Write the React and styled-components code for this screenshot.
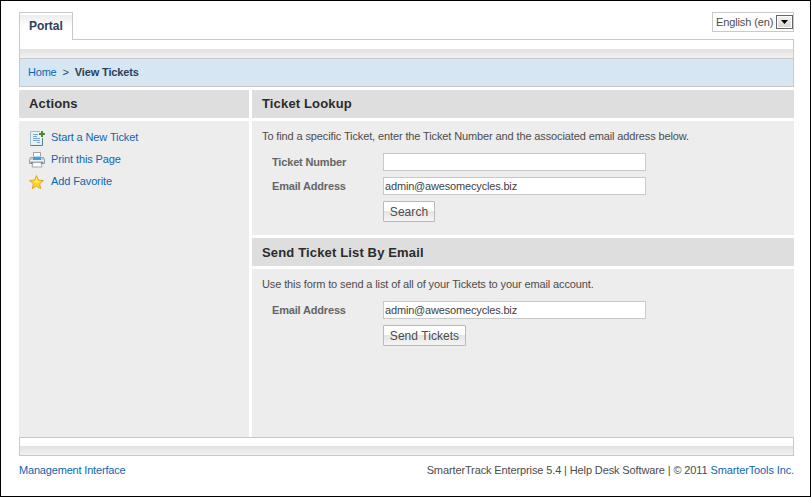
import React from "react";
import styled, { createGlobalStyle } from "styled-components";

const GlobalStyle = createGlobalStyle`
  *, *::before, *::after { box-sizing: border-box; }
  body { margin: 0; background: #fff; }
`;

const Page = styled.div`
  display: flex;
  flex-direction: column;
  width: 811px;
  height: 497px;
  padding: 11px 16px 0 18px;
  border: 1px solid #000;
  background: #fff;
  color: #4c4c4c;
  font: 11px/14px "Liberation Sans", Arial, sans-serif;
  letter-spacing: -0.12px;
  white-space: nowrap;
`;

const Link = styled.a`
  color: #0e66b0;
  text-decoration: none;
  letter-spacing: ${(p) => (p.$ls === undefined ? "inherit" : `${p.$ls}px`)};
`;

const TopBar = styled.header`
  display: flex;
  justify-content: space-between;
  align-items: flex-start;
  height: 27px;
`;

const Tab = styled.div`
  position: relative;
  z-index: 1;
  width: 54px;
  height: 28px;
  padding: 6px 0 0 9px;
  border: 1px solid #c9c9c9;
  border-bottom: 0;
  background: linear-gradient(#fff 0 2px, #ececec 2px, #fff 14px);
  color: #2c4058;
  font-size: 12px;
  font-weight: bold;
  line-height: 15px;
  letter-spacing: -0.05px;
`;

const Language = styled.div`
  display: flex;
  justify-content: space-between;
  width: 82px;
  height: 20px;
  padding: 2px 0 0 3px;
  border: 1px solid #c9c9c9;
  line-height: 15px;
`;

const Arrow = styled.span`
  display: flex;
  align-items: center;
  justify-content: center;
  width: 17px;
  height: 14px;
  border: 1px solid #666;
  background: linear-gradient(#f4f4f4, #d4d4d4);
  box-shadow: inset 0 0 0 1px #fff;
`;

const Strip = styled.div`
  flex: none;
  height: ${(p) => p.$height}px;
  border: 1px solid #c9c9c9;
  background: linear-gradient(#fff 0 ${(p) => p.$split}px, #e2e2e2 ${(p) => p.$split}px, #f2f2f2);
`;

const Crumbs = styled.nav`
  display: flex;
  gap: 6px;
  height: 28px;
  padding: 6px 8px 0;
  border: 1px solid #c9c9c9;
  border-top: 0;
  background: #d7e6f3;
  color: #2c4058;
  b { letter-spacing: -0.15px; }
`;

const Columns = styled.main`
  display: grid;
  grid-template-columns: 230px 542px;
  gap: 3px;
  height: 347px;
  margin-top: 3px;
`;

const Column = styled.section`
  display: flex;
  flex-direction: column;
  gap: 3px;
`;

const Heading = styled.h2`
  height: 28px;
  margin: 0;
  padding: ${(p) => p.$top || 6}px 10px 0;
  background: #dedede;
  color: #2b2b2b;
  font-size: 13px;
  line-height: 16px;
  letter-spacing: 0.15px;
`;

const Body = styled.div`
  flex: ${(p) => (p.$height ? `0 0 ${p.$height}px` : "1")};
  padding: ${(p) => (p.$height ? 8 : 9)}px 10px 0;
  background: #ededed;
`;

const Action = styled.div`
  display: flex;
  align-items: flex-start;
  height: 22px;
  svg { margin-right: 6px; }
`;

const Intro = styled.p`
  margin: 0 0 10px;
`;

const Field = styled.label`
  display: flex;
  height: 24px;
  padding-left: 10px;
  color: #666;
  font-weight: bold;
  line-height: 18px;
`;

const FieldName = styled.span`
  width: 111px;
  letter-spacing: -0.17px;
`;

const Input = styled.input`
  width: 263px;
  height: 18px;
  padding: 0 1px;
  border: 1px solid #c9c9c9;
  border-radius: 0;
  background: #fff;
  color: #3f3f3f;
  font: 11px "Liberation Sans", Arial, sans-serif;
  letter-spacing: -0.17px;
  outline: none;
`;

const Button = styled.button`
  display: block;
  width: ${(p) => p.$width}px;
  height: 21px;
  margin-left: 121px;
  padding: 0;
  border: 1px solid #b9b9b9;
  border-radius: 1px;
  background: linear-gradient(#fff 0 9px, #e4e4e4 9px, #f5f5f5);
  color: #4c4c4c;
  font: 12px/18px "Liberation Sans", Arial, sans-serif;
  letter-spacing: 0.05px;
`;

const Footer = styled.footer`
  display: flex;
  justify-content: space-between;
  padding-top: 7px;
`;

const NewTicketIcon = () => (
  <svg width="16" height="16" viewBox="0 0 16 16">
    <path d="M1.5 1.5h12v14h-12z" fill="#e4f0f7" stroke="#9fbccd" />
    <path d="M4 4.5h5M4 6.5h4M4 8.5h7M4 10.5h7M8 12.5h3" stroke="#7aa9cb" />
    <path d="M13.5 8v7.5h-12" fill="none" stroke="#5b7c91" />
    <path d="M11 0h4v3h1v4h-1v1h-4V7H9V3h2z" fill="#e8f3e8" />
    <path d="M13 1v6M10 4h6" stroke="#4a8538" strokeWidth="2" />
  </svg>
);

const PrinterIcon = () => (
  <svg width="16" height="16" viewBox="0 0 16 16">
    <path d="M4.5.5h7v6h-7z" fill="#fff" stroke="#9aa1a8" />
    <path d="M1.5 5.5h13l1 2v4h-15v-4z" fill="#cdd0d4" stroke="#9a9fa5" />
    <path d="M4 4h8v4H4z" fill="#4a9bd0" />
    <path d="M4 4h8v1H4z" fill="#a9d6f2" />
    <path d="M1 8.5h14" stroke="#eef0f2" />
    <path d="M2 10h12v2H2z" fill="#7a7f85" />
    <path d="M4 10.5h8l1 4.5H3z" fill="#fafafa" stroke="#a5a9ae" />
  </svg>
);

const StarIcon = () => (
  <svg width="16" height="16" viewBox="0 0 16 16">
    <path d="M7.5 1.5l1.9 4.6 5 .4-3.8 3.3 1.2 4.9-4.3-2.6-4.3 2.6 1.2-4.9L.6 6.5l5-.4z" fill="#ffd61e" stroke="#dfa52c" strokeLinejoin="round" />
    <path d="M7.5 3.5l1.2 3.5 3.4.4-3.6 1.6-4.6-1.8 2.5-.3z" fill="#fff06a" />
  </svg>
);

export default function App() {
  return (
    <>
      <GlobalStyle />
      <Page>
        <TopBar>
          <Tab>Portal</Tab>
          <Language>
            English (en)
            <Arrow>
              <svg width="7" height="4" viewBox="0 0 7 4"><path d="M0 0h7L3.5 4z" /></svg>
            </Arrow>
          </Language>
        </TopBar>
        <Strip $height={20} $split={9} />
        <Crumbs>
          <Link href="#" $ls={-0.2}>Home</Link>
          <span>&gt;</span>
          <b>View Tickets</b>
        </Crumbs>
        <Columns>
          <Column>
            <Heading>Actions</Heading>
            <Body>
              <Action><NewTicketIcon /><Link href="#">Start a New Ticket</Link></Action>
              <Action><PrinterIcon /><Link href="#">Print this Page</Link></Action>
              <Action><StarIcon /><Link href="#">Add Favorite</Link></Action>
            </Body>
          </Column>
          <Column>
            <Heading>Ticket Lookup</Heading>
            <Body $height={114}>
              <Intro>To find a specific Ticket, enter the Ticket Number and the associated email address below.</Intro>
              <Field><FieldName>Ticket Number</FieldName><Input /></Field>
              <Field><FieldName>Email Address</FieldName><Input defaultValue="admin@awesomecycles.biz" /></Field>
              <Button $width={52}>Search</Button>
            </Body>
            <Heading $top={7}>Send Ticket List By Email</Heading>
            <Body $height={168}>
              <Intro>Use this form to send a list of all of your Tickets to your email account.</Intro>
              <Field><FieldName>Email Address</FieldName><Input defaultValue="admin@awesomecycles.biz" /></Field>
              <Button $width={83}>Send Tickets</Button>
            </Body>
          </Column>
        </Columns>
        <Strip $height={19} $split={8} />
        <Footer>
          <Link href="#" $ls={-0.18}>Management Interface</Link>
          <span>SmarterTrack Enterprise 5.4 | Help Desk Software | © 2011 <Link href="#">SmarterTools Inc.</Link></span>
        </Footer>
      </Page>
    </>
  );
}
